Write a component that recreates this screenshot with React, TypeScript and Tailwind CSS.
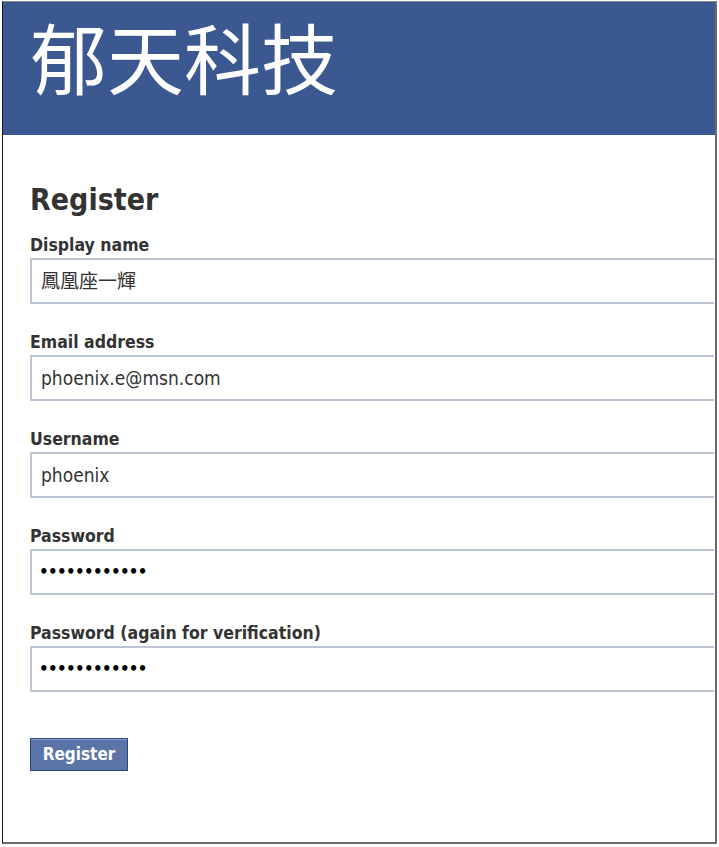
import React from "react";

const latin = "font-['DejaVu_Sans_Condensed','DejaVu_Sans',sans-serif]";

function Field({ label, value, mono }: { label: string; value: string; mono?: boolean }) {
  return (
    <div className="flex flex-col">
      <label className={`${latin} font-bold text-[17.5px] leading-[21px] text-[#333333]`}>{label}</label>
      <div className={`mt-[2px] h-[46px] w-[684px] border-2 border-r-0 border-[#bcc6d4] bg-white flex items-center ${mono ? "pl-[7px]" : "pl-[9px]"}`}>
        {mono ? (
          <span className="text-[15px] tracking-[-0.6px] text-black font-['DejaVu_Sans',sans-serif] font-bold leading-none">{value}</span>
        ) : (
          <span className="text-[19px] text-[#333333] font-['DejaVu_Sans_Condensed','Noto_Sans_CJK_TC',sans-serif]">{value}</span>
        )}
      </div>
    </div>
  );
}

export default function App() {
  return (
    <div className="w-[719px] h-[847px] bg-white pt-[1px] pl-[2px]">
      <div className="w-[715px] h-[843px] border-t border-t-[#8a8a8a] border-l border-l-[#1c1818] border-r-2 border-r-[#6b6b6b] border-b-2 border-b-[#6b6b6b] flex flex-col">
        <div className="h-[133px] bg-[#3b5891] pl-[27px] shrink-0 flex items-start">
          <div className="text-white text-[77px] leading-[108px] font-['Noto_Sans_CJK_TC',sans-serif] font-normal">郁天科技</div>
        </div>
        <div className="pl-[27px] pt-[47px] flex flex-col">
          <h1 className={`${latin} font-bold text-[30px] leading-[36px] text-[#333333]`}>Register</h1>
          <div className="mt-[17px] flex flex-col gap-[28px]">
            <Field label="Display name" value="鳳凰座一輝" />
            <Field label="Email address" value="phoenix.e@msn.com" />
            <Field label="Username" value="phoenix" />
            <Field label="Password" value="••••••••••••" mono />
            <Field label="Password (again for verification)" value="••••••••••••" mono />
          </div>
          <div className="mt-[46px]">
            <button className={`${latin} h-[33px] w-[98px] bg-[#5a74a8] border border-[#2c4a80] shadow-[inset_0_1px_0_#8da1c6] text-white font-bold text-[17px] leading-none`}>
              Register
            </button>
          </div>
        </div>
      </div>
    </div>
  );
}
